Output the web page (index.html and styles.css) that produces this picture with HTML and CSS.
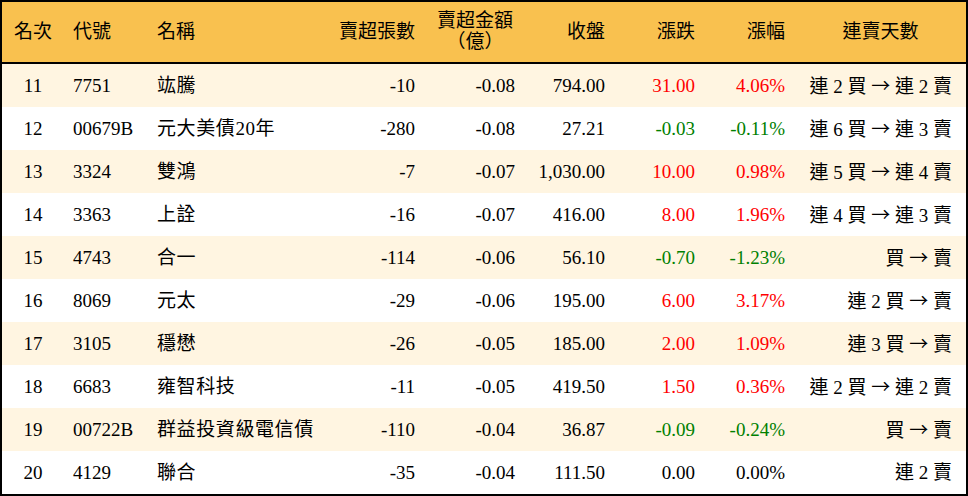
FILE: index.html
```html
<!DOCTYPE html>
<html lang="zh-Hant">
<head>
<meta charset="utf-8">
<title>賣超排行</title>
<link rel="stylesheet" href="styles.css">
</head>
<body>
<div class="frame">
<table class="rank">
<colgroup>
<col class="c-rank"><col class="c-code"><col class="c-name"><col class="c-vol"><col class="c-amt"><col class="c-close"><col class="c-chg"><col class="c-pct"><col class="c-days">
</colgroup>
<thead>
<tr>
<th class="ctr">名次</th>
<th class="lft">代號</th>
<th class="lft">名稱</th>
<th class="rgt">賣超張數</th>
<th class="ctr two">賣超金額<br>（億）</th>
<th class="rgt">收盤</th>
<th class="rgt">漲跌</th>
<th class="rgt">漲幅</th>
<th class="ctr">連賣天數</th>
</tr>
</thead>
<tbody>
<tr class="alt"><td class="ctr">11</td><td class="lft">7751</td><td class="lft name">竑騰</td><td class="rgt">-10</td><td class="rgt">-0.08</td><td class="rgt">794.00</td><td class="rgt up">31.00</td><td class="rgt up">4.06%</td><td class="rgt days">連 2 買 <span class="arrow">→</span> 連 2 賣</td></tr>
<tr><td class="ctr">12</td><td class="lft">00679B</td><td class="lft name">元大美債20年</td><td class="rgt">-280</td><td class="rgt">-0.08</td><td class="rgt">27.21</td><td class="rgt dn">-0.03</td><td class="rgt dn">-0.11%</td><td class="rgt days">連 6 買 <span class="arrow">→</span> 連 3 賣</td></tr>
<tr class="alt"><td class="ctr">13</td><td class="lft">3324</td><td class="lft name">雙鴻</td><td class="rgt">-7</td><td class="rgt">-0.07</td><td class="rgt">1,030.00</td><td class="rgt up">10.00</td><td class="rgt up">0.98%</td><td class="rgt days">連 5 買 <span class="arrow">→</span> 連 4 賣</td></tr>
<tr><td class="ctr">14</td><td class="lft">3363</td><td class="lft name">上詮</td><td class="rgt">-16</td><td class="rgt">-0.07</td><td class="rgt">416.00</td><td class="rgt up">8.00</td><td class="rgt up">1.96%</td><td class="rgt days">連 4 買 <span class="arrow">→</span> 連 3 賣</td></tr>
<tr class="alt"><td class="ctr">15</td><td class="lft">4743</td><td class="lft name">合一</td><td class="rgt">-114</td><td class="rgt">-0.06</td><td class="rgt">56.10</td><td class="rgt dn">-0.70</td><td class="rgt dn">-1.23%</td><td class="rgt days">買 <span class="arrow">→</span> 賣</td></tr>
<tr><td class="ctr">16</td><td class="lft">8069</td><td class="lft name">元太</td><td class="rgt">-29</td><td class="rgt">-0.06</td><td class="rgt">195.00</td><td class="rgt up">6.00</td><td class="rgt up">3.17%</td><td class="rgt days">連 2 買 <span class="arrow">→</span> 賣</td></tr>
<tr class="alt"><td class="ctr">17</td><td class="lft">3105</td><td class="lft name">穩懋</td><td class="rgt">-26</td><td class="rgt">-0.05</td><td class="rgt">185.00</td><td class="rgt up">2.00</td><td class="rgt up">1.09%</td><td class="rgt days">連 3 買 <span class="arrow">→</span> 賣</td></tr>
<tr><td class="ctr">18</td><td class="lft">6683</td><td class="lft name">雍智科技</td><td class="rgt">-11</td><td class="rgt">-0.05</td><td class="rgt">419.50</td><td class="rgt up">1.50</td><td class="rgt up">0.36%</td><td class="rgt days">連 2 買 <span class="arrow">→</span> 連 2 賣</td></tr>
<tr class="alt"><td class="ctr">19</td><td class="lft">00722B</td><td class="lft name">群益投資級電信債</td><td class="rgt">-110</td><td class="rgt">-0.04</td><td class="rgt">36.87</td><td class="rgt dn">-0.09</td><td class="rgt dn">-0.24%</td><td class="rgt days">買 <span class="arrow">→</span> 賣</td></tr>
<tr><td class="ctr">20</td><td class="lft">4129</td><td class="lft name">聯合</td><td class="rgt">-35</td><td class="rgt">-0.04</td><td class="rgt">111.50</td><td class="rgt">0.00</td><td class="rgt">0.00%</td><td class="rgt days">連 2 賣</td></tr>
</tbody>
</table>
</div>
</body>
</html>
```
FILE: styles.css
```css
html, body {
  margin: 0;
  padding: 0;
  background: #ffffff;
}
body {
  width: 968px;
  height: 496px;
  overflow: hidden;
  font-family: "Liberation Serif", "Noto Sans CJK TC", serif;
  font-size: 19px;
  color: #000000;
}
.frame {
  box-sizing: border-box;
  width: 968px;
  height: 496px;
  border: 2px solid #000000;
  overflow: hidden;
}
.rank {
  width: 964px;
  border-collapse: separate;
  border-spacing: 0;
  table-layout: fixed;
}
.c-rank { width: 62px; }
.c-code { width: 84px; }
.c-name { width: 177px; }
.c-vol { width: 100px; }
.c-amt { width: 100px; }
.c-close { width: 90px; }
.c-chg { width: 90px; }
.c-pct { width: 90px; }
.c-days { width: 171px; }
.rank thead th {
  box-sizing: border-box;
  height: 62px;
  padding: 0 10px 0 9px;
  background: #f9c14f;
  border-bottom: 2px solid #000000;
  font-weight: normal;
  line-height: 22px;
  vertical-align: middle;
  white-space: nowrap;
}
.rank thead th.two {
  line-height: 21px;
  padding-bottom: 3px;
}
.rank tbody td {
  box-sizing: border-box;
  height: 43px;
  padding: 0 10px 0 9px;
  line-height: 22px;
  vertical-align: middle;
  white-space: nowrap;
}
.rank tbody tr.alt td {
  background: #fff5e1;
}
.ctr { text-align: center; }
.lft { text-align: left; }
.rgt { text-align: right; }
.rank td.name { letter-spacing: 0.6px; }
.rank td.days { padding-right: 14px; }
.rank th.ctr { padding-left: 0; padding-right: 0; }
.rank td.ctr { padding-left: 0; padding-right: 0; }
.arrow {
  font-family: "Noto Sans CJK TC", sans-serif;
}
.up { color: #ff0000; }
.dn { color: #008000; }
```
